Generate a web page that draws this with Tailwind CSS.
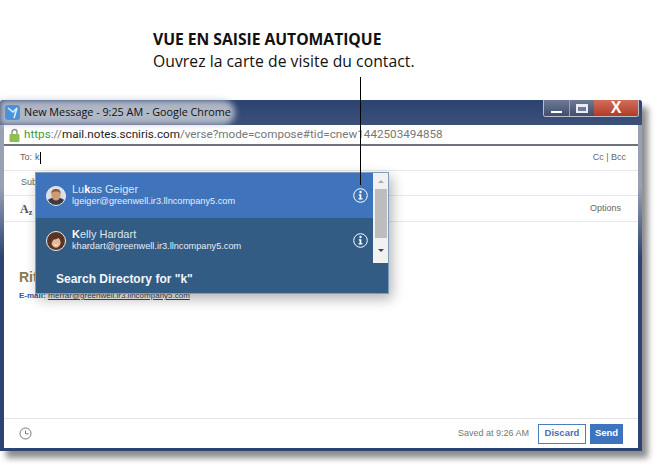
<!DOCTYPE html>
<html lang="fr">
<head>
  <meta charset="UTF-8">
  <title>Vue en saisie automatique</title>
  <script src="https://cdn.jsdelivr.net/npm/@tailwindcss/browser@4"></script>
</head>
<body class="bg-white font-['Liberation_Sans',sans-serif] w-[657px] h-[466px] overflow-hidden relative">
  <!-- legende -->
  <div class="h-[100px] pl-[153px] pt-[29px] font-['Open_Sans',sans-serif] text-[#111]">
    <div class="text-[15.700px] leading-[21px] font-bold tracking-[-0.03px]">VUE EN SAISIE AUTOMATIQUE</div>
    <div class="text-[15.700px] leading-[22px] tracking-[0.05px]">Ouvrez la carte de visite du contact.</div>
  </div>

  <!-- fenetre -->
  <div class="relative w-[642px] h-[351px] rounded-t-[3px] bg-gradient-to-b from-[#98a1b3] from-[25%] to-[#2c4373] to-[45%] shadow-[6px_7px_6px_rgba(0,0,0,0.45)] flex flex-col px-[4px] pb-[3px]">
    <div class="h-[25px] -mx-[4px] px-[4px] rounded-t-[3px] bg-gradient-to-b from-[#2c4270] to-[#3c5079] flex items-center relative shrink-0">
      <div class="absolute left-0 top-0 w-[235px] h-[25px] bg-[#c6cad3]/85 rounded-r-full blur-[3px]"></div>
      <svg class="relative w-[15px] h-[15px] ml-[1px]" viewBox="0 0 15 15">
        <rect width="15" height="15" rx="3" fill="#4a93dc"/>
        <path d="M3 3l5 4 4-4-3 10" stroke="#dfeeff" stroke-width="1.500" fill="none"/>
      </svg>
      <span class="relative ml-[4px] text-[10.800px] font-['Open_Sans',sans-serif] text-[#111]">New Message - 9:25 AM - Google Chrome</span>
      <div class="absolute right-[3px] top-0 flex h-[17px] rounded-b-[3px] border border-t-0 border-[#b8c0ce] overflow-hidden">
        <div class="w-[25px] bg-gradient-to-b from-[#6f7b94] to-[#3f4e6e] flex items-end justify-center pb-[3px]"><div class="w-[11px] h-[2px] bg-white"></div></div>
        <div class="w-[25px] bg-gradient-to-b from-[#6f7b94] to-[#3f4e6e] border-l border-[#98a2b4] flex items-center justify-center"><div class="w-[12px] h-[9px] border-2 border-t-[3px] border-[#e8ecf2] bg-[#6f7b94]"></div></div>
        <div class="w-[44px] bg-gradient-to-b from-[#cf6e5c] to-[#b23a24] flex items-center justify-center text-white font-bold text-[16px] leading-none">X</div>
      </div>
    </div>

    <!-- adresse -->
    <div class="h-[21px] bg-white border-b-2 border-[#6f7379] flex items-center shrink-0 pl-[5px] font-['Roboto',sans-serif] text-[11.700px] whitespace-nowrap">
      <svg class="w-[11px] h-[14px] mr-[4px]" viewBox="0 0 11 14">
        <path d="M3 6V4a2.500 2.500 0 0 1 5 0v2" stroke="#888" stroke-width="1.300" fill="none"/>
        <rect y="6" x="0.500" width="10" height="8" rx="1" fill="#8cc152"/>
      </svg>
      <span class="text-[#3f9a3a]">https</span><span class="text-[#777]">://</span><span class="text-[#222]">mail.notes.scniris.com</span><span class="text-[#777]">/verse?mode=compose#tid=cnew1442503494858</span>
    </div>

    <!-- message -->
    <div class="flex-1 bg-white flex flex-col text-[#666] text-[9px]">
      <div class="h-[25px] border-b border-[#e8e8e8] flex items-center pl-[16px] pr-[12px] justify-between">
        <div class="flex items-center"><span>To:</span><span class="ml-[3px] text-[#555]">k</span><span class="w-px h-[12px] bg-black"></span></div>
        <span>Cc | Bcc</span>
      </div>
      <div class="h-[25px] border-b border-[#e8e8e8] flex items-center pl-[17px]">Sub</div>
      <div class="h-[26px] border-b border-[#e8e8e8] flex items-center justify-between pl-[16px] pr-[17px]">
        <span class="font-['Liberation_Serif',serif] font-bold text-[12px] text-[#555] leading-none">A<sub class="text-[8px]">z</sub></span>
        <span>Options</span>
      </div>
      <div class="flex-1 pl-[15px] pt-[47px]">
        <div class="text-[14px] leading-[16px] font-bold text-[#8a7b50]">Rit</div>
        <div class="mt-[6px] text-[8px] leading-[10px]"><span class="font-bold text-[#34569a]">E-mail: </span><span class="underline text-[#444]">rherrar@greenwell.ir3.llncompany5.com</span></div>
      </div>
      <div class="h-[30px] border-t border-[#e4e4e4] flex items-center pl-[15px] pr-[15px] shrink-0">
        <svg class="w-[13px] h-[13px]" viewBox="0 0 13 13" fill="none" stroke="#777">
          <circle cx="6.500" cy="6.500" r="5.500"/><path d="M6.500 3.500v3.300h3"/>
        </svg>
        <span class="ml-auto text-[9px] text-[#777]">Saved at 9:26 AM</span>
        <button class="ml-[9px] w-[48px] h-[20px] border border-[#4a7cc0] text-[#4a6fb5] font-bold text-[9.500px] bg-white">Discard</button>
        <button class="ml-[4px] w-[33px] h-[20px] bg-[#3d74bd] text-white font-bold text-[9.500px]">Send</button>
      </div>
    </div>
  </div>

  <!-- saisie automatique -->
  <div class="absolute left-[35px] top-[172px] w-[354px] h-[122px] bg-[#325c83] border border-[#7f9cbc] shadow-[3px_5px_12px_rgba(0,0,0,0.3)] text-white">
    <div class="h-[45px] bg-[#3f74bc] flex items-center pl-[10px] pr-[5px] mr-[15px]">
      <svg class="w-[20px] h-[20px] shrink-0" viewBox="0 0 20 20">
        <circle cx="10" cy="10" r="9.500" fill="#d9dfe6"/>
        <path d="M1.500 14a9 9 0 0 0 17 0l-4-2h-9z" fill="#3a3a42"/>
        <ellipse cx="10" cy="9" rx="4.600" ry="5.500" fill="#d19a74"/>
        <path d="M5.300 8c0-4 2-5 4.700-5s4.700 1 4.700 5c-1-2-2.500-2.500-4.700-2.500S6.300 6 5.300 8z" fill="#8a5a36"/>
        <circle cx="10" cy="10" r="9.500" fill="none" stroke="#e9eef3"/>
      </svg>
      <div class="ml-[6px] flex-1 -mt-[2px]">
        <div class="text-[11px] leading-[13px] text-[#dbe6f3]">Lu<b class="text-white">k</b>as Geiger</div>
        <div class="text-[9.200px] leading-[11px] text-[#e6eef7]">lgeiger@greenwell.ir3.llncompany5.com</div>
      </div>
      <svg class="w-[15px] h-[15px]" viewBox="0 0 15 15" fill="none">
        <circle cx="7.500" cy="7.500" r="6.800" stroke="white"/>
        <circle cx="7.500" cy="4" r="1.200" fill="white"/>
        <path d="M5.800 6.300h2.500v4h1.200v1.300h-4v-1.300h1.100v-2.700h-.8z" fill="white"/>
      </svg>
    </div>
    <div class="h-[45px] flex items-center pl-[10px] pr-[5px] mr-[15px]">
      <svg class="w-[20px] h-[20px] shrink-0" viewBox="0 0 20 20">
        <circle cx="10" cy="10" r="9.500" fill="#5a3524"/>
        <ellipse cx="10" cy="11" rx="4.700" ry="5.800" fill="#e4b898"/>
        <path d="M4 14c0-8 2-10 6-10s6 3 5.500 9c-1-3-1.500-5-3-6-2 1.500-4 1.500-5 1.500C6.500 10 6 12 4 14z" fill="#5a3524"/>
        <path d="M7.800 13.500c1.500 1 3 1 4.400 0" stroke="#fff" stroke-width="0.800" fill="none"/>
        <circle cx="10" cy="10" r="9.500" fill="none" stroke="#e9eef3"/>
      </svg>
      <div class="ml-[6px] flex-1 -mt-[2px]">
        <div class="text-[11px] leading-[13px] text-[#dbe6f3]"><b class="text-white">K</b>elly Hardart</div>
        <div class="text-[9.200px] leading-[11px] text-[#e6eef7]">khardart@greenwell.ir3.llncompany5.com</div>
      </div>
      <svg class="w-[15px] h-[15px]" viewBox="0 0 15 15" fill="none">
        <circle cx="7.500" cy="7.500" r="6.800" stroke="white"/>
        <circle cx="7.500" cy="4" r="1.200" fill="white"/>
        <path d="M5.800 6.300h2.500v4h1.200v1.300h-4v-1.300h1.100v-2.700h-.8z" fill="white"/>
      </svg>
    </div>
    <div class="pl-[20px] pt-[7px] text-[12px] font-bold text-[#f2f6fa]">Search Directory for "k"</div>

    <!-- ascenseur -->
    <div class="absolute right-0 top-0 w-[15px] h-[90px] bg-[#f1f1f1] flex flex-col items-center">
      <div class="h-[16px] flex items-center justify-center"><div class="border-x-[3px] border-x-transparent border-b-[3px] border-b-[#aaa]"></div></div>
      <div class="w-[12px] h-[49px] bg-[#bdbdbd]"></div>
      <div class="flex-1 flex items-center justify-center"><div class="border-x-[3px] border-x-transparent border-t-[3px] border-t-[#444]"></div></div>
    </div>
  </div>

  <!-- trait de rappel -->
  <div class="absolute left-[360px] top-[77px] w-px h-[108px] bg-black"></div>
</body>
</html>
